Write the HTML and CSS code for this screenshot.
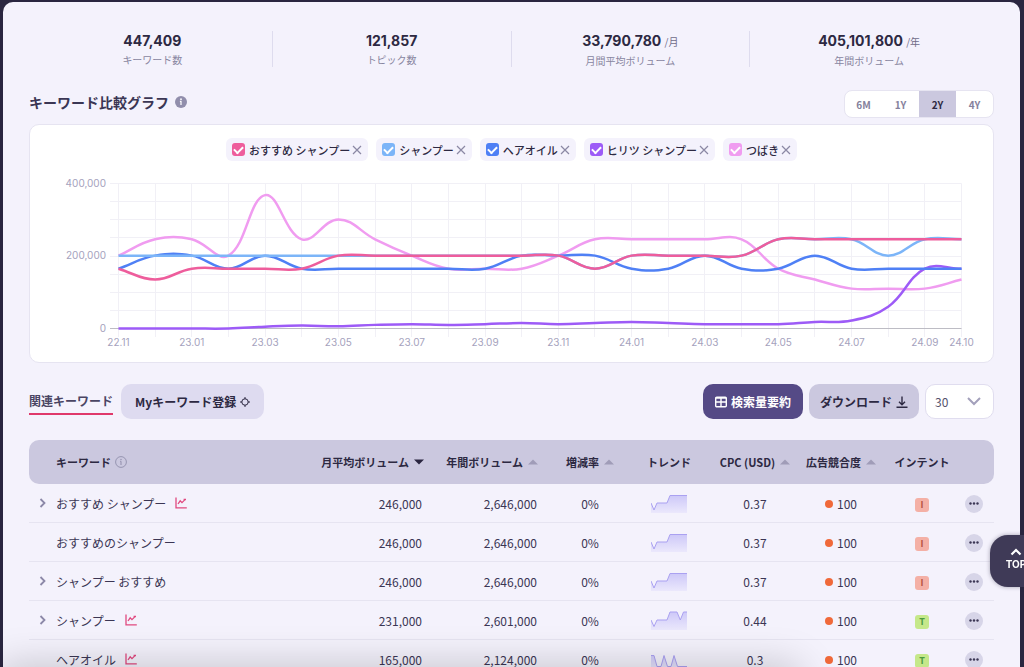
FILE: index.html
```html
<!DOCTYPE html>
<html lang="ja">
<head>
<meta charset="utf-8">
<meta name="viewport" content="width=device-width, initial-scale=1">
<title>キーワード</title>
<link rel="stylesheet" href="styles.css">
</head>
<body>
<svg class="defs" width="0" height="0" aria-hidden="true">
  <defs>
    <linearGradient id="spark-fill" x1="0" y1="0" x2="0" y2="1"><stop offset="0" stop-color="#cdc8f8"/><stop offset="1" stop-color="#ebe8fc"/></linearGradient>
    <symbol id="i-close" viewBox="0 0 10 10"><path d="M1 1l8 8M9 1l-8 8" fill="none" stroke="#8b88a4" stroke-width="1.2"/></symbol>
    <symbol id="i-chev" viewBox="0 0 8 10"><path d="M1.5 1l4 4-4 4" fill="none" stroke="#8c88a8" stroke-width="1.8"/></symbol>
    <symbol id="i-chart" viewBox="0 0 12 12"><path d="M1 .5v10.300h10.800" fill="none" stroke="#e0497f" stroke-width="1.300"/><path d="M3 7l2.200-3.200L7 5.600l3-3M8.600 2.500h2.400" fill="none" stroke="#e0497f" stroke-width="1.300"/></symbol>
    <symbol id="i-more" viewBox="0 0 18 18"><circle cx="5.500" cy="8.500" r="1.200"/><circle cx="9" cy="8.500" r="1.200"/><circle cx="12.500" cy="8.500" r="1.200"/></symbol>
    <symbol id="i-up" viewBox="0 0 10 6"><path d="M0 5.500L5 .5l5 5z" fill="#a09cb8"/></symbol>
    <symbol id="spark-a" viewBox="0 0 36 19"><path d="M0 9l3 7 3-7h10l3-7.500h17V19H0z" fill="url(#spark-fill)"/><path d="M0 9l3 7 3-7h10l3-7.500h17" fill="none" stroke="#aaa1f1"/></symbol>
    <symbol id="spark-b" viewBox="0 0 36 19"><path d="M0 9l3 6.500 3-6.500h10l3-8h7l3.300 8 3.200-8H36V19H0z" fill="url(#spark-fill)"/><path d="M0 9l3 6.500 3-6.500h10l3-8h7l3.300 8 3.200-8H36" fill="none" stroke="#aaa1f1"/></symbol>
    <symbol id="spark-c" viewBox="0 0 36 19"><path d="M0 5.500h3l3 11h4l3-11 3.500 11H20l3-11 3.500 11H36V19H0z" fill="url(#spark-fill)"/><path d="M0 5.500h3l3 11h4l3-11 3.500 11H20l3-11 3.500 11H36" fill="none" stroke="#aaa1f1"/></symbol>
  </defs>
</svg>
<main class="shell">
  <section class="stats">
    <div class="stat"><p class="stat-value">447,409</p><p class="stat-label">キーワード数</p></div>
    <div class="stat"><p class="stat-value">121,857</p><p class="stat-label">トピック数</p></div>
    <div class="stat"><p class="stat-value">33,790,780 <span class="unit">/月</span></p><p class="stat-label">月間平均ボリューム</p></div>
    <div class="stat"><p class="stat-value">405,101,800 <span class="unit">/年</span></p><p class="stat-label">年間ボリューム</p></div>
  </section>

  <section class="graph">
    <div class="graph-head">
      <h2 class="title">キーワード比較グラフ
        <svg class="info" viewBox="0 0 12 12" aria-hidden="true"><circle cx="6" cy="6" r="6" fill="#918eac"/><circle cx="6" cy="3.200" r=".9" fill="#fff"/><path d="M4.900 5.300H6v3.700" fill="none" stroke="#fff" stroke-width="1.200"/></svg>
      </h2>
      <div class="range">
        <button type="button">6M</button><button type="button">1Y</button><button type="button" class="on">2Y</button><button type="button">4Y</button>
      </div>
    </div>
    <div class="card">
      <div class="chips">
        <div class="chip"><label><input type="checkbox" class="box rose" checked>おすすめ シャンプー</label><button type="button" aria-label="削除"><svg><use href="#i-close"/></svg></button></div>
        <div class="chip"><label><input type="checkbox" class="box sky" checked>シャンプー</label><button type="button" aria-label="削除"><svg><use href="#i-close"/></svg></button></div>
        <div class="chip"><label><input type="checkbox" class="box blue" checked>ヘアオイル</label><button type="button" aria-label="削除"><svg><use href="#i-close"/></svg></button></div>
        <div class="chip"><label><input type="checkbox" class="box violet" checked>ヒリツ シャンプー</label><button type="button" aria-label="削除"><svg><use href="#i-close"/></svg></button></div>
        <div class="chip"><label><input type="checkbox" class="box pink" checked>つばき</label><button type="button" aria-label="削除"><svg><use href="#i-close"/></svg></button></div>
      </div>
      <svg class="chart" id="chart" viewBox="0 0 963 200"></svg>
    </div>
  </section>

  <div class="tools">
    <a class="tab" href="#">関連キーワード</a>
    <button type="button" class="btn soft">Myキーワード登録
      <svg class="ic-target" viewBox="0 0 10 10" aria-hidden="true"><circle cx="5" cy="5" r="3.200"/><path d="M5 0v2M5 8v2M0 5h2M8 5h2"/></svg>
    </button>
    <div class="tools-right">
      <button type="button" class="btn primary">
        <svg class="ic-grid" viewBox="0 0 12 12" aria-hidden="true"><rect x=".7" y="1.200" width="10.600" height="9.600" rx="1"/><path d="M.7 2h10.600M.7 6h10.600M6 2v9"/></svg>検索量要約
      </button>
      <button type="button" class="btn mid">ダウンロード
        <svg class="ic-down" viewBox="0 0 12 12" aria-hidden="true"><path d="M6 .5v8M3 5.800l3 3 3-3M.5 11.200h11"/></svg>
      </button>
      <div class="select">
        <select aria-label="表示件数"><option>30</option><option>50</option><option>100</option></select>
        <svg viewBox="0 0 14 9" aria-hidden="true"><path d="M1 1l6 6 6-6" fill="none" stroke="#a3a0bb" stroke-width="2"/></svg>
      </div>
    </div>
  </div>

  <table class="grid">
    <colgroup><col class="c-tog"><col><col class="c-month"><col class="c-year"><col class="c-rate"><col class="c-trend"><col class="c-cpc"><col class="c-ad"><col class="c-intent"><col class="c-more"></colgroup>
    <thead>
      <tr>
        <th></th>
        <th class="left"><span class="th">キーワード<svg class="info" viewBox="0 0 12 12" aria-hidden="true"><circle cx="6" cy="6" r="5.400" fill="none" stroke="#918eac" stroke-width=".9"/><circle cx="6" cy="3.500" r=".7" fill="#918eac"/><path d="M5.200 5.300H6V9" fill="none" stroke="#918eac"/></svg></span></th>
        <th class="right"><span class="th sort">月平均ボリューム<svg class="tri" viewBox="0 0 10 6"><path d="M0 .5h10l-5 5z" fill="#2a2540"/></svg></span></th>
        <th class="right year"><span class="th sort">年間ボリューム<svg class="tri"><use href="#i-up"/></svg></span></th>
        <th><span class="th sort">増減率<svg class="tri"><use href="#i-up"/></svg></span></th>
        <th>トレンド</th>
        <th><span class="th sort">CPC (USD)<svg class="tri"><use href="#i-up"/></svg></span></th>
        <th><span class="th sort">広告競合度<svg class="tri"><use href="#i-up"/></svg></span></th>
        <th>インテント</th>
        <th></th>
      </tr>
    </thead>
    <tbody>
      <tr>
        <td><button type="button" class="toggle" aria-label="展開"><svg><use href="#i-chev"/></svg></button></td>
        <td class="left"><span class="kw">おすすめ シャンプー<svg><use href="#i-chart"/></svg></span></td>
        <td class="right">246,000</td><td class="right year">2,646,000</td><td>0%</td>
        <td><svg class="spark"><use href="#spark-a"/></svg></td><td>0.37</td>
        <td><span class="ad">100</span></td><td><span class="badge info-b">I</span></td>
        <td class="last"><button type="button" class="more" aria-label="メニュー"><svg><use href="#i-more"/></svg></button></td>
      </tr>
      <tr>
        <td></td>
        <td class="left"><span class="kw">おすすめのシャンプー</span></td>
        <td class="right">246,000</td><td class="right year">2,646,000</td><td>0%</td>
        <td><svg class="spark"><use href="#spark-a"/></svg></td><td>0.37</td>
        <td><span class="ad">100</span></td><td><span class="badge info-b">I</span></td>
        <td class="last"><button type="button" class="more" aria-label="メニュー"><svg><use href="#i-more"/></svg></button></td>
      </tr>
      <tr>
        <td><button type="button" class="toggle" aria-label="展開"><svg><use href="#i-chev"/></svg></button></td>
        <td class="left"><span class="kw">シャンプー おすすめ</span></td>
        <td class="right">246,000</td><td class="right year">2,646,000</td><td>0%</td>
        <td><svg class="spark"><use href="#spark-a"/></svg></td><td>0.37</td>
        <td><span class="ad">100</span></td><td><span class="badge info-b">I</span></td>
        <td class="last"><button type="button" class="more" aria-label="メニュー"><svg><use href="#i-more"/></svg></button></td>
      </tr>
      <tr>
        <td><button type="button" class="toggle" aria-label="展開"><svg><use href="#i-chev"/></svg></button></td>
        <td class="left"><span class="kw">シャンプー<svg><use href="#i-chart"/></svg></span></td>
        <td class="right">231,000</td><td class="right year">2,601,000</td><td>0%</td>
        <td><svg class="spark"><use href="#spark-b"/></svg></td><td>0.44</td>
        <td><span class="ad">100</span></td><td><span class="badge trans-b">T</span></td>
        <td class="last"><button type="button" class="more" aria-label="メニュー"><svg><use href="#i-more"/></svg></button></td>
      </tr>
      <tr>
        <td></td>
        <td class="left"><span class="kw">ヘアオイル<svg><use href="#i-chart"/></svg></span></td>
        <td class="right">165,000</td><td class="right year">2,124,000</td><td>0%</td>
        <td><svg class="spark"><use href="#spark-c"/></svg></td><td>0.3</td>
        <td><span class="ad">100</span></td><td><span class="badge trans-b">T</span></td>
        <td class="last"><button type="button" class="more" aria-label="メニュー"><svg><use href="#i-more"/></svg></button></td>
      </tr>
    </tbody>
  </table>
</main>
<div class="bottom-shade"></div>
<button type="button" class="to-top"><svg viewBox="0 0 12 8" aria-hidden="true"><path d="M1.500 6.500L6 2l4.500 4.500" fill="none" stroke="#fff" stroke-width="2.200"/></svg>TOP</button>
<script src="chart.js"></script>
</body>
</html>
```

FILE: styles.css
```css
* { box-sizing: border-box; }

body {
  margin: 0;
  height: 100vh;
  overflow: hidden;
  padding: 2px 4px 0 3px;
  background: #2a2640;
  color: #2d2942;
  font-family: "Noto Sans CJK JP", sans-serif;
  font-size: 12px;
}

p, h2 { margin: 0; }

button, select {
  font: inherit;
  color: inherit;
  border: 0;
  padding: 0;
  background: none;
  cursor: pointer;
}

svg { display: block; flex: none; }

.defs { position: absolute; }

.shell {
  height: 100%;
  overflow-y: auto;
  scrollbar-width: none;
  padding: 29px 26px 0;
  border-radius: 10px 10px 0 0;
  background: #f4f2fc;
}

.stats {
  display: grid;
  grid-template-columns: repeat(4, 1fr);
  padding: 0 6px 0 4px;
  margin-bottom: 23px;
}

.stat { text-align: center; height: 36px; }
.stat + .stat { border-left: 1px solid #dedcee; }

.stat-value {
  font-family: Inter, "Noto Sans CJK JP", sans-serif;
  font-size: 14px;
  font-weight: 700;
  line-height: 20px;
}

.unit {
  font-family: "Noto Sans CJK JP", sans-serif;
  font-size: 10px;
  font-weight: 400;
  color: #6f6b88;
}

.stat-label { font-size: 10px; line-height: 18px; color: #8885a0; }

.graph-head {
  display: flex;
  align-items: flex-start;
  justify-content: space-between;
  margin-bottom: 6px;
}

.title {
  display: flex;
  align-items: center;
  gap: 6px;
  font-size: 14px;
  font-weight: 700;
  line-height: 24px;
  color: #3b3654;
}

.info { width: 12px; height: 12px; }

.range {
  display: flex;
  overflow: hidden;
  border: 1px solid #e6e4f1;
  border-radius: 8px;
  background: #fff;
}

.range button {
  width: 37px;
  height: 26px;
  font-size: 10px;
  font-weight: 700;
  color: #85819c;
}

.range .on { background: #cbc8df; color: #2d2942; }

.card {
  border: 1px solid #e6e4f1;
  border-radius: 10px;
  background: #fff;
  padding-top: 13px;
}

.chips { display: flex; justify-content: center; gap: 8px; margin-bottom: 1px; }

.chip {
  display: flex;
  align-items: center;
  gap: 2px;
  height: 23px;
  padding: 0 6px;
  border-radius: 6px;
  background: #f4f2fc;
  font-size: 11px;
  font-weight: 500;
}

.chip label { display: flex; align-items: center; gap: 4px; }
.chip svg { width: 10px; height: 10px; }

.box {
  appearance: none;
  width: 13px;
  height: 13px;
  margin: 0;
  border-radius: 3px;
  display: grid;
  place-items: center;
}

.box:checked::after {
  content: "";
  width: 7px;
  height: 4px;
  margin-bottom: 2px;
  border: solid #fff;
  border-width: 0 0 2px 2px;
  transform: rotate(-45deg);
}

.rose { background: #ee5d9c; }
.sky { background: #7cb5f8; }
.blue { background: #4f80f5; }
.violet { background: #9d5bf7; }
.pink { background: #f09cf0; }

.chart { width: 100%; height: auto; }

.chart text {
  font-family: Inter, sans-serif;
  font-size: 10px;
  fill: #a5a2bd;
}

.rule { stroke: #f1f0f6; stroke-width: 1; }
.axis { stroke: #bdbcc4; stroke-width: 1; }
.line { fill: none; stroke-width: 2.5; }

.tools {
  display: flex;
  align-items: center;
  gap: 8px;
  margin: 21px 0;
}

.tab {
  padding-bottom: 1px;
  border-bottom: 2px solid #e0396b;
  margin-top: 2px;
  font-size: 12px;
  font-weight: 700;
  line-height: 22px;
  color: #4a4563;
  text-decoration: none;
}

.btn {
  display: flex;
  align-items: center;
  gap: 4px;
  height: 35px;
  padding: 0 12px;
  border-radius: 10px;
  font-weight: 700;
}

.soft { padding: 0 14px; background: #dedbf0; }
.primary { background: #554a86; color: #fff; }
.mid { padding: 0 11px; background: #cbc8df; }

.btn svg { fill: none; stroke: currentColor; }
.ic-target { width: 10px; height: 10px; }
.ic-grid, .ic-down { width: 12px; height: 12px; stroke-width: 1.4; }

.tools-right { display: flex; gap: 6px; margin-left: auto; }

.select { display: grid; align-items: center; }

.select select {
  grid-area: 1 / 1;
  appearance: none;
  width: 69px;
  height: 35px;
  padding-left: 9px;
  border: 1px solid #e0ddef;
  border-radius: 10px;
  background: #fff;
  color: #55516c;
}

.select svg {
  grid-area: 1 / 1;
  justify-self: end;
  width: 14px;
  height: 9px;
  margin-right: 13px;
  pointer-events: none;
}

.grid { width: 100%; table-layout: fixed; border-collapse: separate; border-spacing: 0; }

.c-tog { width: 26px; }
.c-month { width: 120px; }
.c-year { width: 126px; }
.c-rate { width: 80px; }
.c-trend { width: 78px; }
.c-cpc { width: 94px; }
.c-ad { width: 78px; }
.c-intent { width: 84px; }
.c-more { width: 30px; }

.grid th {
  height: 44px;
  padding: 0;
  background: #cbc8df;
  font-size: 11px;
  font-weight: 700;
  white-space: nowrap;
}

.grid th:first-child { border-radius: 10px 0 0 10px; }
.grid th:last-child { border-radius: 0 10px 10px 0; }

.grid td {
  height: 39px;
  padding: 0;
  border-bottom: 1px solid #e6e4f1;
  text-align: center;
  color: #3b3654;
}

.grid .left { text-align: left; padding-left: 1px; }
.grid .right { text-align: right; }
.grid td.right { padding-right: 2px; }
.grid .year { padding-right: 12px; }
.grid td.year { padding-right: 13px; }
.grid .last { padding-right: 10px; }

.th { display: inline-flex; align-items: center; gap: 4px; }
.sort { gap: 5px; }
.tri { width: 10px; height: 6px; }

.toggle { display: block; margin-left: 10px; }
.toggle svg { width: 8px; height: 10px; }

.kw { display: flex; align-items: center; gap: 9px; }
.kw svg { width: 12px; height: 12px; }

.spark { width: 36px; height: 19px; margin: 0 auto; }

.ad { display: inline-flex; align-items: center; gap: 4px; }
.ad::before { content: ""; width: 8px; height: 8px; margin-top: 2px; border-radius: 50%; background: #f0693a; }

.badge {
  display: block;
  width: 14px;
  margin: 3px auto 0;
  border-radius: 3px;
  font-size: 9px;
  font-weight: 700;
  line-height: 14px;
}

.info-b { background: #f4b0a6; color: #b4503f; }
.trans-b { background: #c5e88a; color: #4b9a3f; }

.more { display: block; width: 18px; height: 18px; margin: 2px auto 0; border-radius: 50%; background: #d7d5e8; }
.more svg { width: 18px; height: 18px; fill: #3b3654; }

.bottom-shade {
  position: fixed;
  top: 100%;
  left: 0;
  width: 78%;
  height: 40px;
  box-shadow: 0 0 40px rgba(0, 0, 0, 0.22);
  pointer-events: none;
}

.to-top {
  position: fixed;
  right: -18px;
  bottom: 80px;
  display: flex;
  flex-direction: column;
  align-items: center;
  justify-content: center;
  gap: 2px;
  width: 52px;
  height: 52px;
  padding-bottom: 4px;
  border-radius: 18px;
  background: #3f3a57;
  box-shadow: 0 0 4px rgba(42, 38, 64, 0.4);
  color: #fff;
  font-family: Inter, sans-serif;
  font-size: 10px;
  font-weight: 700;
}

.to-top svg { width: 12px; height: 8px; }
```

FILE: chart.js
```js
const NS = "http://www.w3.org/2000/svg";
const chart = document.getElementById("chart");
const LEFT = 88.5, RIGHT = 931.5, TOP = 21.5, BASE = 166.5, COUNT = 24, MAX = 400;

// Monthly volumes in thousands, back to front.
const series = [
  { color: "#f09cf0", data: [201,246,246,201,368,246,301,246,201,165,165,165,201,246,246,246,246,246,165,135,110,110,110,135] },
  { color: "#9d5bf7", data: [0,0,0,0,5,8,6,10,12,10,12,15,12,15,18,15,12,12,12,18,22,60,165,165] },
  { color: "#4f80f5", data: [165,201,201,165,201,165,165,165,165,165,165,201,201,201,165,165,201,165,165,201,165,165,165,165] },
  { color: "#7cb5f8", data: [201,201,201,201,201,201,201,201,201,201,201,201,201,165,201,201,201,201,246,246,246,201,246,246] },
  { color: "#ee5d9c", data: [165,135,165,165,165,165,201,201,201,201,201,201,201,165,201,201,201,201,246,246,246,246,246,246] }
];

const px = i => LEFT + (RIGHT - LEFT) * i / (COUNT - 1);
const py = v => BASE - (BASE - TOP) * v / MAX;

function add(name, attrs, text) {
  const el = document.createElementNS(NS, name);
  for (const key in attrs) el.setAttribute(key, attrs[key]);
  if (text) el.textContent = text;
  chart.appendChild(el);
}

function spline(points) {
  const tension = 0.4;
  const ctrl = points.map((p, i) => {
    const a = points[i - 1] || p, b = points[i + 1] || p;
    const d1 = Math.hypot(p[0] - a[0], p[1] - a[1]);
    const d2 = Math.hypot(b[0] - p[0], b[1] - p[1]);
    const f1 = tension * d1 / (d1 + d2), f2 = tension * d2 / (d1 + d2);
    const dx = b[0] - a[0], dy = b[1] - a[1];
    return { before: [p[0] - f1 * dx, p[1] - f1 * dy], after: [p[0] + f2 * dx, p[1] + f2 * dy] };
  });
  let d = "M" + points[0];
  for (let i = 1; i < points.length; i++) {
    d += "C" + ctrl[i - 1].after + " " + ctrl[i].before + " " + points[i];
  }
  return d;
}

for (let k = 1; k <= 8; k++) {
  const y = Math.floor(py(k * 50)) + 0.5;
  add("line", { class: "rule", x1: 80, x2: RIGHT, y1: y, y2: y });
}
for (let i = 0; i < COUNT; i++) {
  const x = Math.floor(px(i)) + 0.5;
  add("line", { class: "rule", x1: x, x2: x, y1: TOP, y2: 175 });
}
add("line", { class: "axis", x1: 80, x2: RIGHT, y1: BASE, y2: BASE });

[["400,000", 400], ["200,000", 200], ["0", 0]].forEach(([label, v]) =>
  add("text", { x: 76, y: py(v) + 3, "text-anchor": "end" }, label));

["22.11","23.01","23.03","23.05","23.07","23.09","23.11","24.01","24.03","24.05","24.07","24.09"].forEach((label, k) =>
  add("text", { x: px(k * 2), y: 184, "text-anchor": "middle" }, label));
add("text", { x: RIGHT, y: 184, "text-anchor": "middle" }, "24.10");

series.forEach(s =>
  add("path", { class: "line", stroke: s.color, d: spline(s.data.map((v, i) => [px(i), py(v)])) }));
```
